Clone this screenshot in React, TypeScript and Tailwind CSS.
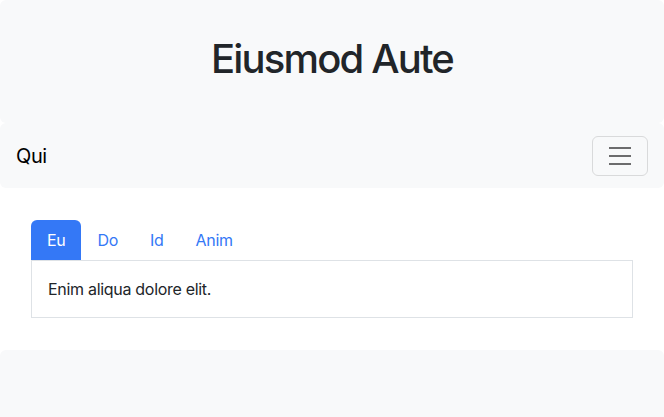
export default function App() {
  const tabs = ["Eu", "Do", "Id", "Anim"];
  return (
    <div className="min-h-[417px] bg-white text-[#212529]" style={{ fontFamily: "Inter, 'Helvetica Neue', Arial, sans-serif" }}>
      <header className="bg-[#f8f9fa] rounded-md h-[123px] pt-[35px]">
        <h1 className="text-center text-[40px] leading-[48px] font-medium tracking-[-1.85px]">Eiusmod Aute</h1>
      </header>
      <nav className="bg-[#f8f9fa] rounded-md h-[65px] flex items-center justify-between pl-4 pr-4">
        <span className="text-[20px] leading-[30px] text-black tracking-[-0.4px]">Qui</span>
        <button className="w-[56px] h-[40px] border border-[#d9dadb] rounded-md flex items-center justify-center">
          <svg width="30" height="30" viewBox="0 0 30 30">
            <path d="M4 7h22M4 15h22M4 23h22" stroke="#6c6c6d" strokeWidth="2" strokeLinecap="butt" />
          </svg>
        </button>
      </nav>
      <main className="px-[31px] py-8">
        <div className="flex">
          {tabs.map((t, i) => (
            <button
              key={t}
              className={
                i === 0
                  ? "h-10 px-4 rounded-t-md bg-[#3478f6] text-white text-base tracking-[-0.3px]"
                  : "h-10 px-4 text-[#3478f6] text-base tracking-[-0.3px]"
              }
            >
              {t}
            </button>
          ))}
        </div>
        <div className="border border-[#dee2e6] h-[58px] px-4 flex items-center text-base tracking-[-0.3px]">
          Enim aliqua dolore elit.
        </div>
      </main>
      <footer className="bg-[#f8f9fa] rounded-t-md h-[67px]" />
    </div>
  );
}
